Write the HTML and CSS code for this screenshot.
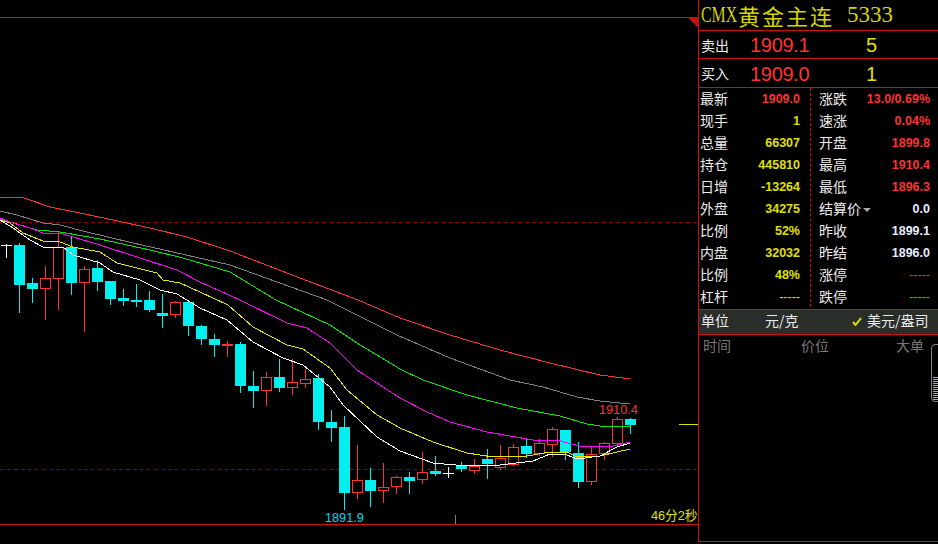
FILE: index.html
```html
<!DOCTYPE html>
<html lang="zh">
<head>
<meta charset="utf-8">
<title>CMX黄金主连</title>
<link rel="stylesheet" href="styles.css">
</head>
<body>
<main class="app">
<section class="chart">
<svg class="plot" width="698" height="544" viewBox="0 0 698 544">
<path class="guide" d="M0 222.5H697M0 469.5H697"/>
<path class="frame" d="M0 17.5H698M0 524.5H698"/>
<polygon class="corner" points="689,18 698,18 698,28"/>
<path class="last" d="M679 424.5H698"/>
<path class="tick" d="M455.5 515V524"/>
<path class="doji" d="M6.5 244V258M1 245.5H12M448.5 467V478M443 473.5H454"/>
<path class="wick-c" d="M19.5 243V313M32.5 278V303M71.5 236V295M97.5 260V291M110.5 281V305M123.5 289V306M136.5 284V307M149.5 291V312M162.5 294V328M188.5 302V336M201.5 325V345M214.5 334V357M240.5 342V393M253.5 371V408M279.5 359V392M318.5 374V430M331.5 410V442M344.5 416V510M370.5 468V507M409.5 472V494M435.5 456V476M461.5 462V472M487.5 449V479M526.5 439V458M565.5 430V460M578.5 442V488M630.5 418V434"/>
<path class="wick-r" d="M45.5 266V320M58.5 232V310M84.5 266V332M175.5 301V318M227.5 341V357M266.5 372V406M292.5 359V395M305.5 369V388M357.5 445V499M383.5 463V503M396.5 476V494M422.5 452V484M474.5 459V474M500.5 445V470M513.5 444V466M539.5 439V456M552.5 427V457M591.5 446V485M604.5 442V460M617.5 417V446"/>
<g class="body-c">
<rect x="14" y="245" width="11" height="40"/><rect x="27" y="283" width="11" height="6"/><rect x="66" y="247" width="11" height="36"/><rect x="92" y="268" width="11" height="14"/><rect x="105" y="281" width="11" height="18"/><rect x="118" y="298" width="11" height="3"/><rect x="131" y="300" width="11" height="2"/><rect x="144" y="300" width="11" height="10"/><rect x="157" y="313" width="11" height="3"/><rect x="183" y="302" width="11" height="24"/><rect x="196" y="326" width="11" height="13"/><rect x="209" y="339" width="11" height="6"/><rect x="235" y="344" width="11" height="42"/><rect x="248" y="386" width="11" height="5"/><rect x="274" y="377" width="11" height="11"/><rect x="313" y="378" width="11" height="44"/><rect x="326" y="422" width="11" height="6"/><rect x="339" y="427" width="11" height="66"/><rect x="365" y="480" width="11" height="11"/><rect x="404" y="477" width="11" height="4"/><rect x="430" y="471" width="11" height="3"/><rect x="456" y="466" width="11" height="3"/><rect x="482" y="459" width="11" height="5"/><rect x="521" y="446" width="11" height="8"/><rect x="560" y="430" width="11" height="22"/><rect x="573" y="453" width="11" height="29"/><rect x="625" y="419" width="11" height="6"/>
</g>
<g class="body-r">
<rect x="40.5" y="278.5" width="10" height="10"/><rect x="53.5" y="247.5" width="10" height="31"/><rect x="79.5" y="269.5" width="10" height="13"/><rect x="170.5" y="302.5" width="10" height="12"/><rect x="222.5" y="344.5" width="10" height="1"/><rect x="261.5" y="377.5" width="10" height="13"/><rect x="287.5" y="382.5" width="10" height="5"/><rect x="300.5" y="379.5" width="10" height="4"/><rect x="352.5" y="480.5" width="10" height="12"/><rect x="378.5" y="487.5" width="10" height="3"/><rect x="391.5" y="477.5" width="10" height="9"/><rect x="417.5" y="472.5" width="10" height="7"/><rect x="469.5" y="466.5" width="10" height="4"/><rect x="495.5" y="458.5" width="10" height="9"/><rect x="508.5" y="447.5" width="10" height="17"/><rect x="534.5" y="443.5" width="10" height="10"/><rect x="547.5" y="429.5" width="10" height="15"/><rect x="586.5" y="454.5" width="10" height="27"/><rect x="599.5" y="443.5" width="10" height="10"/><rect x="612.5" y="419.5" width="10" height="24"/>
</g>
<polyline class="ma ma-red" points="0,197 24,198 50,207 80,213 113,220 150,228 187,237 230,251 300,278 358,300 400,318 450,335 500,350 550,363 600,375 630,379"/>
<polyline class="ma ma-grey" points="0,211 17,215 43,223 60,225 87,232 133,243 173,252 230,265 327,300 397,335 450,358 510,380 543,387 577,397 600,401 630,404"/>
<polyline class="ma ma-green" points="0,219 17,224 37,230 60,232 100,239 150,250 183,258 230,272 276,300 330,325 357,343 400,369 423,380 467,395 517,408 560,416 587,424 600,426 630,427"/>
<polyline class="ma ma-magenta" points="0,218 13,223 30,228 43,233 63,234 100,245 140,258 177,270 200,282 240,300 287,323 307,328 330,343 357,370 400,398 427,412 450,422 487,432 533,440 557,440 583,447 613,446 630,442"/>
<polyline class="ma ma-yellow" points="0,220 10,223 23,233 43,241 60,242 73,247 100,252 117,263 157,273 163,280 180,283 200,292 228,305 253,327 287,345 303,349 330,368 347,390 377,415 400,428 433,442 467,453 493,457 527,456 550,452 567,452 577,457 600,456 630,449"/>
<polyline class="ma ma-white" points="0,220 13,228 30,240 43,247 63,247 73,255 100,263 113,272 140,280 160,290 177,294 200,308 227,320 253,342 283,358 303,365 330,387 343,405 377,437 400,451 433,463 467,466 500,465 533,461 550,454 567,455 577,459 600,456 617,447 630,443"/>
<text class="lbl lbl-high" x="599" y="414">1910.4</text>
<text class="lbl lbl-low" x="325" y="522">1891.9</text>
<text class="lbl lbl-time" x="651" y="520">46分2秒</text>
</svg>
</section>
<aside class="side">
<header class="title"><span class="t-latin">CMX</span><span class="t-cjk">黄金主连</span><span class="t-code">5333</span></header>
<div class="quote"><span class="q-label">卖出</span><span class="q-price">1909.1</span><span class="q-vol">5</span></div>
<div class="quote quote-b"><span class="q-label">买入</span><span class="q-price">1909.0</span><span class="q-vol">1</span></div>
<div class="stats">
<div class="col col-l">
<div class="stat"><span>最新</span><b class="red">1909.0</b></div>
<div class="stat"><span>现手</span><b class="yel">1</b></div>
<div class="stat"><span>总量</span><b class="yel">66307</b></div>
<div class="stat"><span>持仓</span><b class="yel">445810</b></div>
<div class="stat"><span>日增</span><b class="yel">-13264</b></div>
<div class="stat"><span>外盘</span><b class="yel">34275</b></div>
<div class="stat"><span>比例</span><b class="yel">52%</b></div>
<div class="stat"><span>内盘</span><b class="yel">32032</b></div>
<div class="stat"><span>比例</span><b class="yel">48%</b></div>
<div class="stat"><span>杠杆</span><b class="yel dash">-----</b></div>
</div>
<div class="col col-r">
<div class="stat"><span>涨跌</span><b class="red">13.0/0.69%</b></div>
<div class="stat"><span>速涨</span><b class="red">0.04%</b></div>
<div class="stat"><span>开盘</span><b class="red">1899.8</b></div>
<div class="stat"><span>最高</span><b class="red">1910.4</b></div>
<div class="stat"><span>最低</span><b class="red">1896.3</b></div>
<div class="stat"><span class="has-caret">结算价<i class="caret"></i></span><b class="wht">0.0</b></div>
<div class="stat"><span>昨收</span><b class="wht">1899.1</b></div>
<div class="stat"><span>昨结</span><b class="wht">1896.0</b></div>
<div class="stat"><span>涨停</span><b class="red dash">-----</b></div>
<div class="stat"><span>跌停</span><b class="grn dash">-----</b></div>
</div>
</div>
<div class="unit"><span class="u-label">单位</span><span class="u-a">元/克</span><span class="u-b"><svg class="check" width="10" height="9" viewBox="0 0 10 9"><path d="M1 5L3.5 8L9 1"/></svg>美元/盎司</span></div>
<div class="ticks-head"><span>时间</span><span>价位</span><span>大单</span></div>
<div class="scroll"><div class="scroll-bars"></div></div>
</aside>
</main>
</body>
</html>
```
FILE: styles.css
```css
html, body {
  margin: 0;
  padding: 0;
  background: #000;
}
body {
  width: 938px;
  height: 544px;
  overflow: hidden;
  font-family: "Noto Sans CJK SC", "Liberation Sans", sans-serif;
}
.app {
  display: flex;
  width: 938px;
  height: 544px;
}
.chart {
  width: 698px;
  height: 544px;
  flex: none;
}
.plot {
  display: block;
}
.plot path, .plot rect, .plot polyline, .plot polygon {
  shape-rendering: crispEdges;
  fill: none;
}
.guide {
  stroke: #8a0000;
  stroke-dasharray: 4 3;
}
.frame {
  stroke: #d01010;
}
.plot .corner {
  fill: #c81010;
}
.last {
  stroke: #e0e000;
}
.tick {
  stroke: #808080;
}
.doji {
  stroke: #fff;
}
.wick-c {
  stroke: #00f0f0;
}
.wick-r {
  stroke: #ff3232;
}
.plot .body-c rect {
  fill: #00f0f0;
}
.plot .body-r rect {
  fill: #000;
  stroke: #ff3232;
}
.ma {
  stroke-width: 1;
}
.ma-red { stroke: #ff3232; }
.ma-grey { stroke: #808080; }
.ma-green { stroke: #00e800; }
.ma-magenta { stroke: #ff00ff; }
.ma-yellow { stroke: #e6e600; }
.ma-white { stroke: #fff; }
.lbl {
  font-family: "Liberation Sans", "Noto Sans CJK SC", sans-serif;
  font-size: 12.7px;
}
.lbl-high { fill: #ff3232; }
.lbl-low { fill: #00d8e8; }
.lbl-time { fill: #e0e000; }

.side {
  position: relative;
  width: 240px;
  height: 542px;
  flex: none;
  border-left: 1px solid #d01010;
  border-bottom: 1px solid #d01010;
  box-sizing: border-box;
  color: #ececec;
  overflow: hidden;
}
.title {
  display: flex;
  align-items: center;
  height: 30px;
  border-bottom: 1px solid #d01010;
  padding-left: 2px;
  color: #d4d400;
  white-space: nowrap;
  line-height: 26px;
}
.t-latin {
  display: inline-block;
  width: 36px;
  font-family: "Liberation Serif", serif;
  font-size: 23px;
  transform: scaleX(0.69);
  transform-origin: left center;
}
.t-cjk {
  font-size: 22px;
  letter-spacing: 2px;
  margin-left: 1px;
}
.t-code {
  margin-left: 13px;
  font-family: "Liberation Serif", serif;
  font-size: 23px;
}
.quote {
  display: flex;
  align-items: center;
  height: 27px;
  border-bottom: 1px solid #d01010;
  padding-left: 2px;
}
.quote-b {
  height: 28px;
}
.q-label {
  width: 49px;
  font-size: 14px;
}
.q-price {
  width: 116px;
  margin-top: 2px;
  font-family: "Liberation Sans", sans-serif;
  font-size: 20px;
  letter-spacing: -0.3px;
  color: #ff3232;
}
.q-vol {
  margin-top: 2px;
  font-family: "Liberation Sans", sans-serif;
  font-size: 20px;
  color: #e0e000;
}
.stats {
  display: flex;
  height: 222px;
  border-bottom: 1px solid #d01010;
  box-sizing: border-box;
}
.col {
  display: flex;
  flex-direction: column;
}
.col-l {
  width: 112px;
  height: 219px;
  box-sizing: border-box;
  padding: 0 10px 0 1px;
  border-right: 1px dashed #d01010;
}
.col-r {
  flex: 1;
  padding: 0 8px 0 8px;
}
.stat {
  display: flex;
  flex: none;
  justify-content: space-between;
  align-items: center;
  height: 22px;
  font-size: 14px;
  white-space: nowrap;
}
.stat span {
  margin-top: -2px;
}
.stat b {
  font-family: "Liberation Sans", sans-serif;
  font-size: 12.5px;
  font-weight: 700;
}
.red { color: #ff3232; }
.yel { color: #e0e000; }
.grn { color: #00e000; }
.wht { color: #e4eeff; }
.stat b.dash {
  font-weight: 400;
}
.has-caret {
  display: flex;
  align-items: center;
}
.caret {
  width: 0;
  height: 0;
  margin: 3px 0 0 2px;
  border-left: 4px solid transparent;
  border-right: 4px solid transparent;
  border-top: 4px solid #a8a8a8;
}
.unit {
  display: flex;
  align-items: center;
  height: 25px;
  box-sizing: border-box;
  border-bottom: 1px solid #d01010;
  background: #2a2e2a;
  padding: 0 0 4px 2px;
  font-size: 14px;
  white-space: nowrap;
}
.u-label {
  width: 64px;
}
.u-a {
  width: 87px;
}
.u-b {
  display: flex;
  align-items: center;
}
.check {
  margin: 3px 5px 0 0;
}
.check path {
  fill: none;
  stroke: #e0e000;
  stroke-width: 2;
}
.ticks-head {
  display: grid;
  grid-template-columns: 98px 95px 27px;
  padding: 0 0 0 4px;
  font-size: 14px;
  color: #787878;
  white-space: nowrap;
}
.scroll {
  position: absolute;
  left: 232px;
  top: 344px;
  width: 12px;
  height: 58px;
  box-sizing: border-box;
  border: 1px solid #808080;
  border-radius: 4px;
}
.scroll-bars {
  margin: 32px 0 0 1px;
  height: 24px;
  background: repeating-linear-gradient(to bottom, #50e080 0, #50e080 1px, transparent 1px, transparent 2px);
}
```
